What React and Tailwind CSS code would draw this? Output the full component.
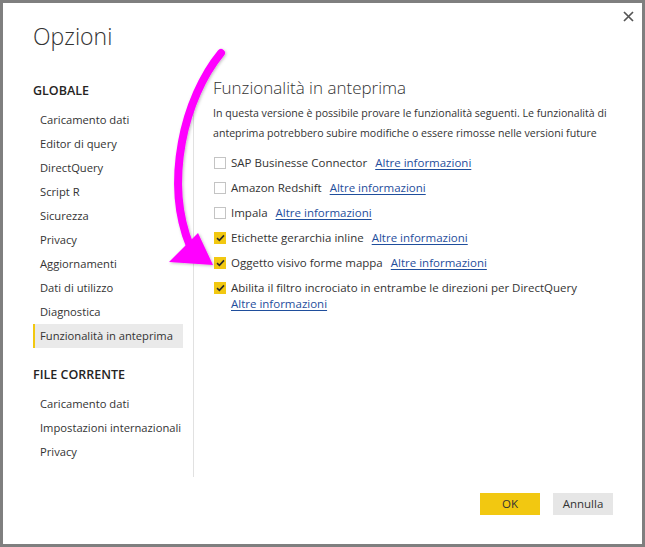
import React from "react";

const F = { fontFamily: '"Open Sans", "Noto Sans", sans-serif' };

const globalItems = [
  "Caricamento dati",
  "Editor di query",
  "DirectQuery",
  "Script R",
  "Sicurezza",
  "Privacy",
  "Aggiornamenti",
  "Dati di utilizzo",
  "Diagnostica",
  "Funzionalità in anteprima",
];
const fileItems = ["Caricamento dati", "Impostazioni internazionali", "Privacy"];

const features = [
  { label: "SAP Businesse Connector", checked: false },
  { label: "Amazon Redshift", checked: false },
  { label: "Impala", checked: false },
  { label: "Etichette gerarchia inline", checked: true },
  { label: "Oggetto visivo forme mappa", checked: true },
  { label: "Abilita il filtro incrociato in entrambe le direzioni per DirectQuery", checked: true, wrap: true },
];

function Box({ checked }) {
  if (checked)
    return (
      <span className="mt-[2px] flex h-[12px] w-[12px] shrink-0 items-center justify-center bg-[#f2c811]">
        <svg width="9" height="8" viewBox="0 0 9 8">
          <path d="M1 4.2 L3.4 6.4 L8 1.4" fill="none" stroke="#2b2b2b" strokeWidth="1.6" />
        </svg>
      </span>
    );
  return <span className="mt-[2px] h-[12px] w-[12px] shrink-0 border border-[#c4c4c4] bg-white" />;
}

function NavItem({ text, active }) {
  return (
    <div
      className={`h-[24px] w-[150px] border-l-2 pl-[5px] text-[11.2px] leading-[24px] text-[#333333] whitespace-nowrap ${
        active ? "border-[#f2c811] bg-[#eaeaea]" : "border-transparent"
      }`}
    >
      {text}
    </div>
  );
}

export default function App() {
  return (
    <div
      style={F}
      className="relative box-border h-[547px] w-[645px] overflow-hidden border-[3px] border-[#7f7f7f] bg-white"
    >
      {/* header */}
      <div className="flex h-[67px] items-start justify-between">
        <div className="pl-[30px] pt-[18px] text-[23px] font-light leading-[30px] text-[#333333]">Opzioni</div>
        <div className="mr-[8px] mt-[8px]">
          <svg width="11" height="11" viewBox="0 0 11 11">
            <path d="M1 1 L10 10 M10 1 L1 10" stroke="#555555" strokeWidth="1.7" />
          </svg>
        </div>
      </div>

      {/* body */}
      <div className="flex h-[407px]">
        <div className="w-[190px] pl-[30px]">
          <div className="mt-[10px] text-[12.5px] font-semibold leading-[22px] text-[#252423]">GLOBALE</div>
          <div className="mt-[6px]">
            {globalItems.map((t, i) => (
              <NavItem key={t} text={t} active={i === globalItems.length - 1} />
            ))}
          </div>
          <div className="mt-[16px] text-[12.5px] font-semibold leading-[22px] text-[#252423]">FILE CORRENTE</div>
          <div className="mt-[6px]">
            {fileItems.map((t) => (
              <NavItem key={t} text={t} />
            ))}
          </div>
        </div>
        <div className="mt-[30px] h-[377px] w-px bg-[#e1e1e1]" />
        <div className="flex-1 pl-[19px]">
          <div className="mt-[6px] text-[17px] font-light leading-[24px] text-[#333333]">Funzionalità in anteprima</div>
          <div className="mt-[3px] whitespace-nowrap text-[10.6px] leading-[20px] text-[#333333]">
            In questa versione è possibile provare le funzionalità seguenti. Le funzionalità di
            <br />
            anteprima potrebbero subire modifiche o essere rimosse nelle versioni future
          </div>
          <div className="mt-[12px] flex flex-col gap-[9px]">
            {features.map((f) => (
              <div key={f.label} className="flex items-start gap-[5px] pl-[1px]">
                <Box checked={f.checked} />
                <div className="text-[11.5px] leading-[16px] text-[#333333]">
                  <span>{f.label}</span>
                  <span
                    className={`${f.wrap ? "block" : "ml-[8px]"} text-[#1f4e9c] underline decoration-[#1f4e9c] underline-offset-2`}
                  >
                    Altre informazioni
                  </span>
                </div>
              </div>
            ))}
          </div>
        </div>
      </div>

      {/* footer */}
      <div className="flex justify-end gap-[13px] pr-[29px] pt-[16px]">
        <button className="h-[22px] w-[60px] bg-[#f2c811] text-[11.5px] text-[#333333]">OK</button>
        <button className="h-[22px] w-[60px] bg-[#e6e6e6] text-[11.5px] text-[#333333]">Annulla</button>
      </div>

      {/* magenta arrow annotation */}
      <svg className="pointer-events-none absolute left-[-3px] top-[-3px]" width="645" height="547">
        <defs>
          <filter id="sh" x="-20%" y="-20%" width="140%" height="140%">
            <feDropShadow dx="1" dy="1" stdDeviation="1.5" floodColor="#000" floodOpacity="0.25" />
          </filter>
        </defs>
        <g filter="url(#sh)">
          <path
            d="M221 53 C 184 98, 164 182, 190 246"
            fill="none"
            stroke="#ff00ff"
            strokeWidth="8"
            strokeLinecap="round"
          />
          <polygon points="169,262 198,233 213,265" fill="#ff00ff" />
        </g>
      </svg>
    </div>
  );
}
